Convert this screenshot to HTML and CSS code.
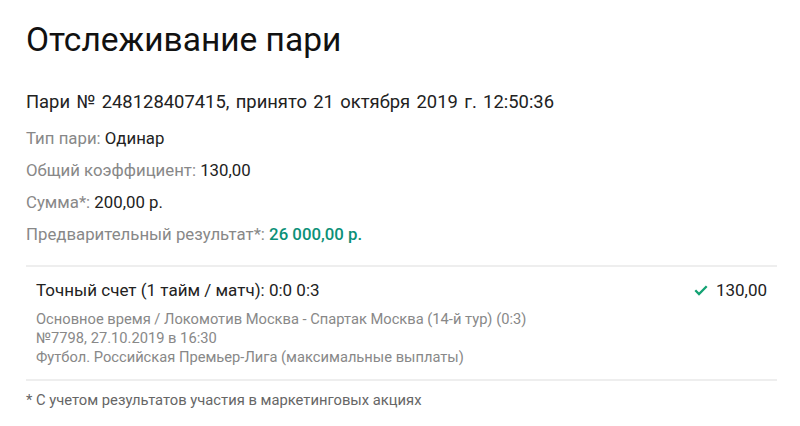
FILE: index.html
```html
<!DOCTYPE html>
<html lang="ru">
<head>
<meta charset="utf-8">
<link rel="stylesheet" href="styles.css">
</head>
<body>
<div class="page">
  <h1 class="title">Отслеживание пари</h1>
  <div class="bet-id">Пари № 248128407415, принято 21 октября 2019 г. 12:50:36</div>
  <div class="info">
    <div class="row"><span class="label">Тип пари:</span> Одинар</div>
    <div class="row"><span class="label">Общий коэффициент:</span> 130,00</div>
    <div class="row"><span class="label">Сумма*:</span> 200,00 р.</div>
    <div class="row"><span class="label">Предварительный результат*:</span> <span class="win">26 000,00 р.</span></div>
  </div>
  <div class="event">
    <div class="event-head">
      <div class="outcome">Точный счет (1 тайм / матч): 0:0 0:3</div>
      <div class="coef">
        <svg class="check" width="14" height="11" viewBox="0 0 14 11"><path d="M1.3 5.3 L5 9 L12.7 1.3" fill="none" stroke="#13a273" stroke-width="2.3"/></svg>
        <span>130,00</span>
      </div>
    </div>
    <div class="event-meta">
      <div>Основное время / Локомотив Москва - Спартак Москва (14-й тур) (0:3)</div>
      <div>№7798, 27.10.2019 в 16:30</div>
      <div>Футбол. Российская Премьер-Лига (максимальные выплаты)</div>
    </div>
  </div>
  <div class="note">* С учетом результатов участия в маркетинговых акциях</div>
</div>
</body>
</html>
```
FILE: styles.css
```css
html, body {
  margin: 0;
  padding: 0;
  background: #fff;
}
body {
  font-family: Roboto, "Noto Sans", sans-serif;
  color: #222;
}
.page {
  padding: 18px 23px 0 26px;
}
.title {
  margin: 0;
  font-size: 33.5px;
  font-weight: 400;
  line-height: 44px;
  color: #111;
}
.bet-id {
  margin-top: 29px;
  font-size: 18.4px;
  line-height: 22px;
  word-spacing: 1.8px;
}
.info {
  margin-top: 9px;
  font-size: 16.8px;
}
.row {
  line-height: 32px;
}
.label {
  color: #888;
}
.win {
  color: #0b9077;
  font-weight: 500;
}
.event {
  margin-top: 15px;
  border-top: 2px solid #eee;
  border-bottom: 2px solid #eee;
  padding: 11px 10px 12px 10px;
}
.event-head {
  display: flex;
  justify-content: space-between;
  align-items: center;
  font-size: 17px;
  line-height: 24px;
}
.coef {
  display: flex;
  align-items: center;
  gap: 8px;
}
.event-meta {
  margin-top: 8px;
  font-size: 14.7px;
  line-height: 19px;
  color: #888;
}
.note {
  margin-top: 9px;
  font-size: 14.75px;
  line-height: 20px;
  color: #666;
}
```
